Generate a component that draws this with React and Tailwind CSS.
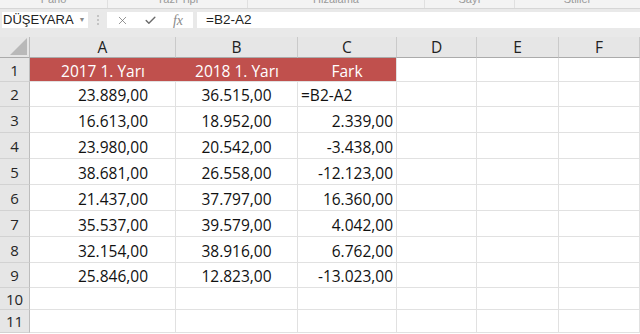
import { X, Check } from 'lucide-react'

const cols = ['A', 'B', 'C', 'D', 'E', 'F']

const rows = [
  ['23.889,00', '36.515,00', '=B2-A2'],
  ['16.613,00', '18.952,00', '2.339,00'],
  ['23.980,00', '20.542,00', '-3.438,00'],
  ['38.681,00', '26.558,00', '-12.123,00'],
  ['21.437,00', '37.797,00', '16.360,00'],
  ['35.537,00', '39.579,00', '4.042,00'],
  ['32.154,00', '38.916,00', '6.762,00'],
  ['25.846,00', '12.823,00', '-13.023,00'],
]

const font = { fontFamily: '"Open Sans", "Liberation Sans", sans-serif' }

// ribbon group labels, only their lower half shows at the top edge
const groups = [
  { label: 'Pano', w: 'w-[108px]' },
  { label: 'Yazı Tipi', w: 'w-[140px]' },
  { label: 'Hizalama', w: 'w-[177px]' },
  { label: 'Sayı', w: 'w-[90px]' },
  { label: 'Stiller', w: 'flex-1' },
]

function RowHead({ n }) {
  return (
    <div className="flex items-center justify-center pt-[1px] bg-[#e6e6e6] border-r border-b border-r-[#bdbdbd] border-b-[#d2d2d2] text-[15px] text-[#262626]">
      {n}
    </div>
  )
}

function Cell({ children, className = '' }) {
  return (
    <div className={`flex items-end pb-[1px] border-r border-b border-[#e1e1e1] text-[15.5px] leading-[20px] text-[#111] whitespace-nowrap ${className}`}>
      {children}
    </div>
  )
}

export default function App() {
  return (
    <div className="w-[640px] h-[334px] overflow-hidden bg-white select-none" style={font}>
      {/* ribbon bottom edge */}
      <div className="h-[9px] flex bg-[#f3f3f3] border-b border-[#d6d6d6] overflow-hidden">
        {groups.map((g, i) => (
          <div key={i} className={`${g.w} relative flex justify-center border-r border-[#e0e0e0] last:border-r-0`}>
            <span className="text-[11px] leading-[11px] -mt-[6px] text-[#9a9a9a]" style={{ fontFamily: '"Liberation Sans", sans-serif' }}>
              {g.label}
            </span>
          </div>
        ))}
      </div>

      {/* formula bar */}
      <div className="h-[28px] bg-[#e9e9e9] pt-[3px] flex items-start" style={{ fontFamily: '"Liberation Sans", sans-serif' }}>
        <div className="ml-[2px] w-[86px] h-[16px] bg-white flex items-center pl-[1px] text-[13px] text-[#222] whitespace-nowrap">
          <span>DÜŞEYARA</span>
          <span className="ml-[5px] text-[7px] text-[#8a8a8a]">▼</span>
        </div>
        <div className="w-[19px] h-[16px] flex flex-col items-center justify-center gap-[2px]">
          <div className="w-[2px] h-[2px] bg-[#c4c4c4]" />
          <div className="w-[2px] h-[2px] bg-[#c4c4c4]" />
          <div className="w-[2px] h-[2px] bg-[#c4c4c4]" />
        </div>
        <div className="w-[86px] h-[16px] bg-white flex items-center text-[#6b6b6b]">
          <div className="w-[30px] flex justify-center"><X size={13} strokeWidth={1.3} /></div>
          <div className="w-[26px] flex justify-center"><Check size={13} strokeWidth={2.6} /></div>
          <div className="w-[30px] flex justify-center italic text-[14px] text-[#8a8a8a]" style={{ fontFamily: '"Liberation Serif", serif' }}>fx</div>
        </div>
        <div className="ml-[4px] flex-1 h-[16px] bg-white flex items-center pl-[9px] text-[13.5px] text-[#222]">
          =B2-A2
        </div>
      </div>

      {/* sheet grid */}
      <div className="grid grid-cols-[30px_146px_122px_99px_80px_82px_1fr] grid-rows-[21px_24px_25px_26px_26px_26px_26px_26px_26px_25px_22px_23px]">
        {/* corner */}
        <div className="relative bg-[#e6e6e6] border-r border-b border-r-[#bdbdbd] border-b-[#ababab]">
          <svg className="absolute right-[2px] bottom-[2px]" width="17" height="17" viewBox="0 0 17 17">
            <polygon points="17,0 17,17 0,17" fill="#b9b9b9" />
          </svg>
        </div>
        {cols.map((c) => (
          <div key={c} className="flex items-center justify-center pt-[2px] bg-[#e6e6e6] border-r border-b border-r-[#cacaca] border-b-[#ababab] text-[15.5px] text-[#222]">
            {c}
          </div>
        ))}

        {/* row 1 */}
        <RowHead n={1} />
        <div className="flex items-center justify-center pt-[2px] bg-[#c0504d] text-white text-[15.5px] leading-[20px] border-b border-[#e1e1e1]">2017 1. Yarı</div>
        <div className="flex items-center justify-center pt-[2px] bg-[#c0504d] text-white text-[15.5px] leading-[20px] border-b border-[#e1e1e1]">2018 1. Yarı</div>
        <div className="flex items-center justify-center pt-[2px] bg-[#c0504d] text-white text-[15.5px] leading-[20px] border-r border-b border-[#e1e1e1]">Fark</div>
        <Cell />
        <Cell />
        <Cell />

        {rows.map((r, i) => [
          <RowHead key={`h${i}`} n={i + 2} />,
          <Cell key={`a${i}`} className="justify-end pr-[27px]">{r[0]}</Cell>,
          <Cell key={`b${i}`} className="justify-center">{r[1]}</Cell>,
          <Cell key={`c${i}`} className={i === 0 ? 'justify-start pl-[3px]' : 'justify-end pr-[3px]'}>{r[2]}</Cell>,
          <Cell key={`d${i}`} />,
          <Cell key={`e${i}`} />,
          <Cell key={`f${i}`} />,
        ])}

        {[10, 11].map((n) => [
          <RowHead key={`h${n}`} n={n} />,
          ...[0, 1, 2, 3, 4, 5].map((k) => <Cell key={`${n}-${k}`} />),
        ])}
      </div>
    </div>
  )
}
